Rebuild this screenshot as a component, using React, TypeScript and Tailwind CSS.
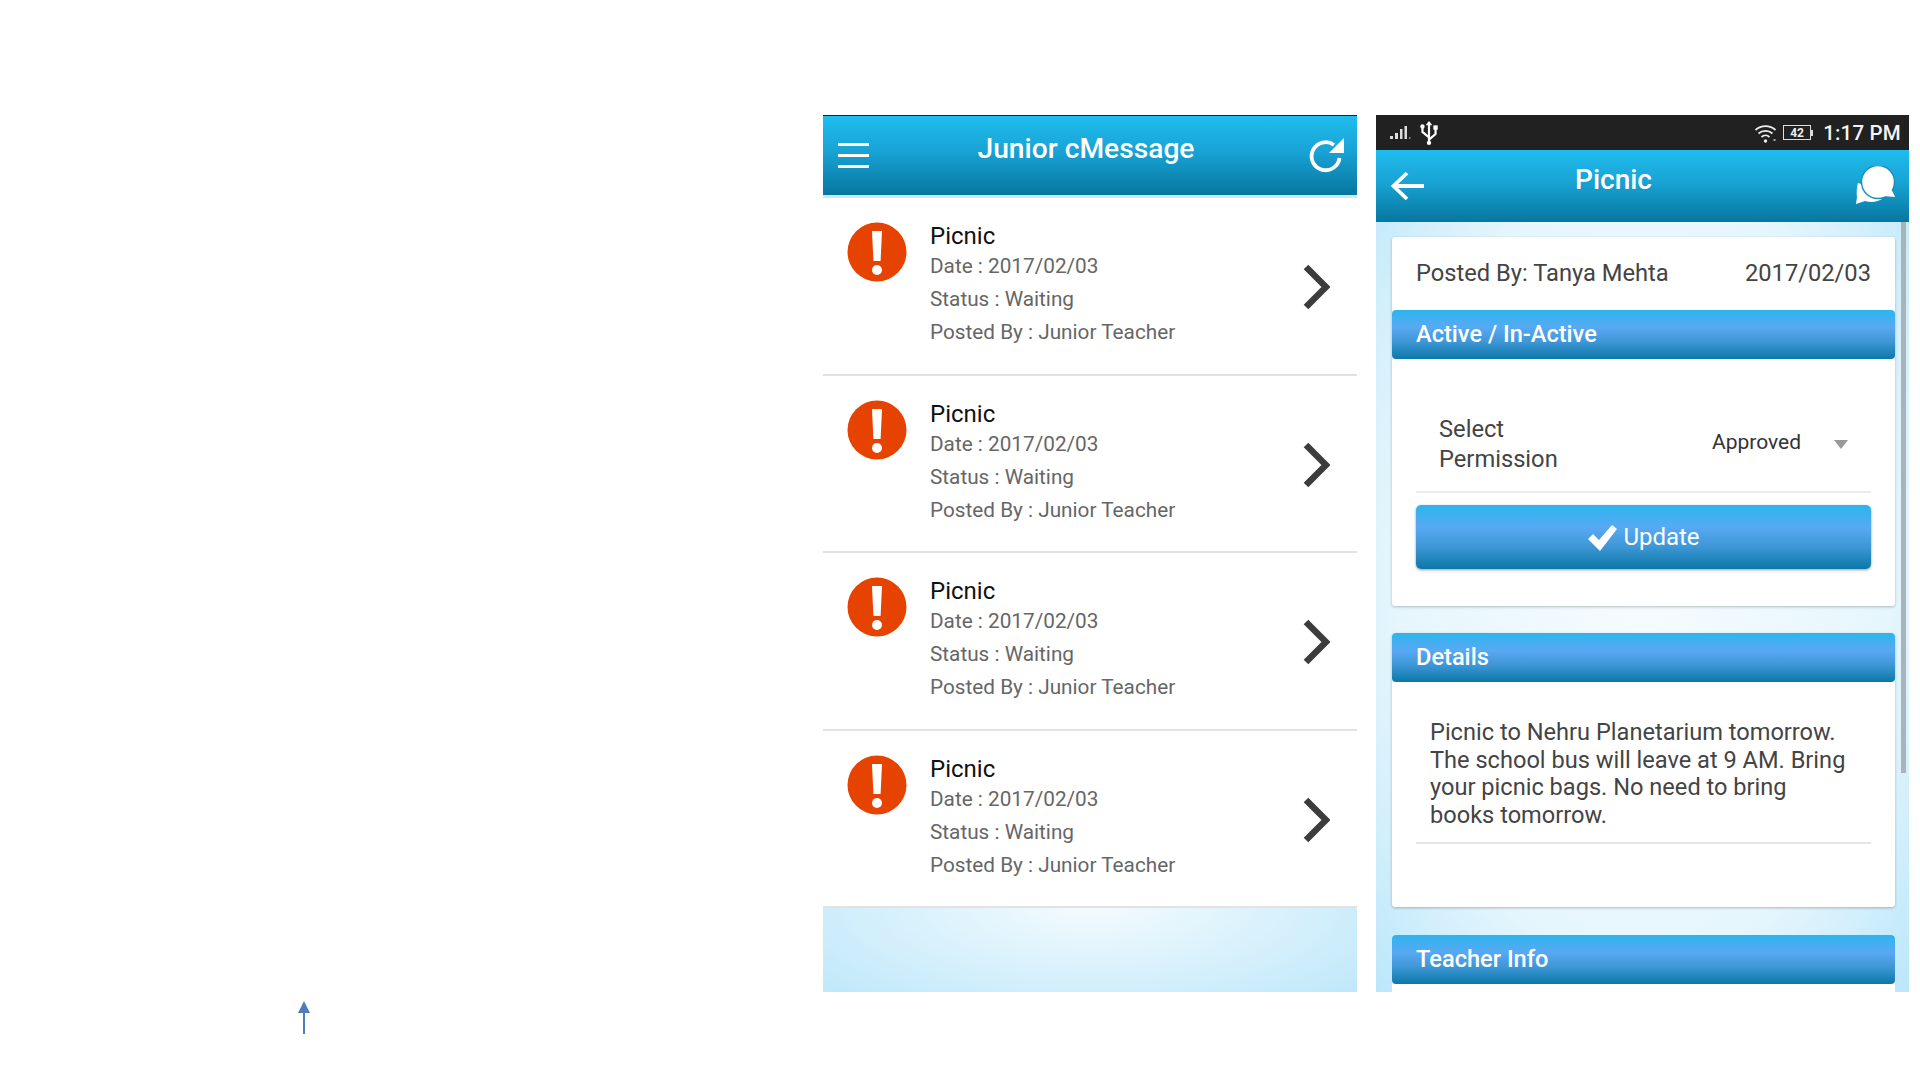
import React from "react";

const f = { fontFamily: "Roboto, 'Liberation Sans', sans-serif" };

function Row() {
  return (
    <div className="h-[177.6px] shrink-0 flex items-start bg-white border-b-2 border-[#e2e2e2] pl-[24px] pr-[27px]">
      <svg width="60" height="60" viewBox="0 0 60 60" className="mt-[24px] shrink-0">
        <circle cx="30" cy="30" r="29.5" fill="#e64200" />
        <path d="M25 9h10l-1.4 30h-7.2z" fill="#fff" />
        <circle cx="30" cy="48" r="5" fill="#fff" />
      </svg>
      <div className="ml-[23px] pt-[22px] flex-1">
        <div className="text-[24px] leading-[32px] text-[#111]">Picnic</div>
        <div className="text-[20.75px] leading-[33px] text-[#666] mt-[-2px]">Date : 2017/02/03</div>
        <div className="text-[20.75px] leading-[33px] text-[#666]">Status : Waiting</div>
        <div className="text-[20.75px] leading-[32px] text-[#666]">Posted By : Junior Teacher</div>
      </div>
      <svg width="28" height="46" viewBox="0 0 28 46" className="mt-[66px] shrink-0">
        <path d="M4 3l20 20L4 43" fill="none" stroke="#3c3c3c" strokeWidth="6.5" />
      </svg>
    </div>
  );
}

function Section({ title }: { title: string }) {
  return (
    <div className="h-[49px] shrink-0 rounded-[4px] flex items-center pl-[24px] text-white text-[23.6px] font-medium pt-[1px] bg-[linear-gradient(180deg,#2cb5ee_0%,#58a9f3_35%,#3f97d6_65%,#0a78a8_100%)]">
      {title}
    </div>
  );
}

export default function App() {
  return (
    <div style={f} className="w-full h-[1080px] bg-white flex overflow-hidden pt-[115px]">
      <div className="w-[823px] shrink-0 h-[919px] flex flex-col justify-end items-start pl-[298px]">
        <svg width="12" height="33" viewBox="0 0 12 33">
          <path d="M6 0l6 12H7v21H5V12H0z" fill="#4a7ebd" />
        </svg>
      </div>

      {/* Left phone */}
      <div className="w-[534px] h-[877px] shrink-0 flex flex-col bg-[radial-gradient(ellipse_360px_130px_at_50%_790px,#f4fbfe_0%,#bfe8fa_100%)]">
        <div className="h-[80px] shrink-0 border-t border-[#222] flex items-center pl-[15px] pr-[12px] bg-[linear-gradient(180deg,#20bcee_0%,#18a3d4_45%,#07769f_100%)]">
          <div className="w-[31px] flex flex-col gap-[8px] mb-[1px]">
            <div className="h-[3px] bg-white" />
            <div className="h-[3px] bg-white" />
            <div className="h-[3px] bg-white" />
          </div>
          <div className="flex-1 text-center text-white text-[28.2px] font-medium pb-[12px] pr-[6px]">Junior cMessage</div>
          <svg width="36" height="36" viewBox="0 0 36 36" className="mb-[2px]">
            <path d="M30.5 21a14 14 0 1 1-5.5-13" fill="none" stroke="#fff" strokeWidth="3.8" />
            <path d="M35 1v15H20z" fill="#fff" />
          </svg>
        </div>
        <div className="h-[3px] shrink-0 bg-[#c6ebf8]" />
        <Row />
        <Row />
        <Row />
        <Row />
      </div>

      <div className="w-[19px] shrink-0" />

      {/* Right phone */}
      <div className="w-[533px] h-[877px] shrink-0 flex flex-col overflow-hidden">
        <div className="h-[35px] shrink-0 bg-[#212121] flex items-center pl-[13px] pr-[8px] text-white">
          <svg width="24" height="14" viewBox="0 0 24 14">
            <rect x="1" y="10" width="3" height="3" fill="#ddd" />
            <rect x="6" y="7" width="3" height="6" fill="#ddd" />
            <rect x="11" y="3" width="2.5" height="10" fill="#ddd" />
            <rect x="15.5" y="0" width="2.5" height="13" fill="#ddd" />
            <rect x="20" y="11" width="1.5" height="2" fill="#888" />
          </svg>
          <svg width="20" height="24" viewBox="0 0 18 22" className="ml-[6px]">
            <path d="M9 1v20M9 15L3 10V6M9 17l6-5V7" fill="none" stroke="#fff" strokeWidth="2" />
            <path d="M9 0l3 4H6z" fill="#fff" />
            <circle cx="3" cy="5" r="2" fill="#fff" />
            <rect x="13" y="4" width="4" height="4" fill="#fff" />
            <circle cx="9" cy="20" r="2" fill="#fff" />
          </svg>
          <div className="flex-1" />
          <svg width="25" height="20" viewBox="0 0 24 20">
            <path d="M1 7a15 15 0 0 1 20 0M4 10.5a10.5 10.5 0 0 1 14 0M7 14a6 6 0 0 1 8 0" fill="none" stroke="#eee" strokeWidth="1.7" />
            <circle cx="11" cy="18" r="1.7" fill="#eee" />
            <rect x="19" y="16" width="2" height="2" fill="#aaa" />
          </svg>
          <div className="ml-[4px] w-[28px] h-[15px] border border-[#ddd] flex items-center justify-center text-[12px] font-bold leading-none text-[#eee]">42</div>
          <div className="w-[2px] h-[6px] bg-[#ddd]" />
          <div className="ml-[10px] text-[20.5px] font-medium tracking-[0.2px] text-[#f4f4f4] leading-none pt-[1px]">1:17 PM</div>
        </div>
        <div className="h-[72px] shrink-0 flex items-center pl-[14px] pr-[12px] bg-[linear-gradient(180deg,#20bcee_0%,#18a3d4_45%,#07769f_100%)]">
          <svg width="36" height="32" viewBox="0 0 36 32">
            <path d="M34 16H4M17 3L3.5 16 17 29" fill="none" stroke="#fff" strokeWidth="3.8" />
          </svg>
          <div className="flex-1 text-center text-white text-[28px] font-medium pb-[12px] pr-[54px]">Picnic</div>
          <svg width="42" height="40" viewBox="0 0 42 40">
            <path d="M3 17c-2 6-1 14-1 14l-1 7 9-3c6 2 12 1 17-2L12 20z" fill="#fff" />
            <path d="M30 26l10 5-6-12z" fill="#fff" />
            <circle cx="23" cy="16" r="16.5" fill="#fff" stroke="#1590ba" strokeWidth="1.4" />
            <path d="M28 30l12 1-6-12z" fill="#fff" />
          </svg>
        </div>
        <div className="flex-1 min-h-0 relative pl-[16px] pr-[14px] pt-[15px] bg-[radial-gradient(ellipse_at_50%_45%,#f6fcff_0%,#e6f6fd_65%,#bbe7fa_100%)]">
          <div className="absolute right-[3px] top-0 w-[5px] h-[551px] bg-[#a9b4b9]" />
          <div className="bg-white rounded-[3px] shadow-[0_1px_3px_rgba(0,0,0,0.25)] h-[369px]">
            <div className="h-[73px] flex items-center justify-between px-[24px] text-[23.7px] text-[#444]">
              <span>Posted By: Tanya Mehta</span>
              <span>2017/02/03</span>
            </div>
            <Section title="Active / In-Active" />
            <div className="mx-[24px] mt-[55px] pb-[17px] pl-[23px] pr-[22px] flex items-center border-b-2 border-[#ececec] text-[#444]">
              <div className="w-[273px] text-[23.7px] leading-[30px]">Select<br />Permission</div>
              <div className="text-[21px] text-[#333] flex-1 pb-[3px]">Approved</div>
              <svg width="16" height="9" viewBox="0 0 16 9"><path d="M1 0h14L8 9z" fill="#999" /></svg>
            </div>
            <div className="mx-[24px] mt-[12px] h-[64px] rounded-[5px] flex items-center justify-center gap-[6px] text-white text-[24px] shadow-[0_1px_3px_rgba(0,0,0,0.4)] bg-[linear-gradient(180deg,#2cb5ee_0%,#58a9f3_35%,#3f97d6_65%,#0a78a8_100%)]">
              <svg width="30" height="27" viewBox="0 0 30 27">
                <path d="M1 15l5-5 6 6L25 1l5 4-17 22z" fill="#fff" />
              </svg>
              Update
            </div>
          </div>
          <div className="mt-[27px] bg-white rounded-[3px] shadow-[0_1px_3px_rgba(0,0,0,0.25)] h-[274px]">
            <Section title="Details" />
            <div className="mx-[24px] h-[162px] border-b-2 border-[#e6e6e6] pt-[37px] px-[14px] text-[23.6px] leading-[27.7px] text-[#444]">
              Picnic to Nehru Planetarium tomorrow.<br />
              The school bus will leave at 9 AM. Bring<br />
              your picnic bags. No need to bring<br />
              books tomorrow.
            </div>
          </div>
          <div className="mt-[28px] bg-white rounded-t-[3px] h-[60px]">
            <Section title="Teacher Info" />
          </div>
        </div>
      </div>
    </div>
  );
}
